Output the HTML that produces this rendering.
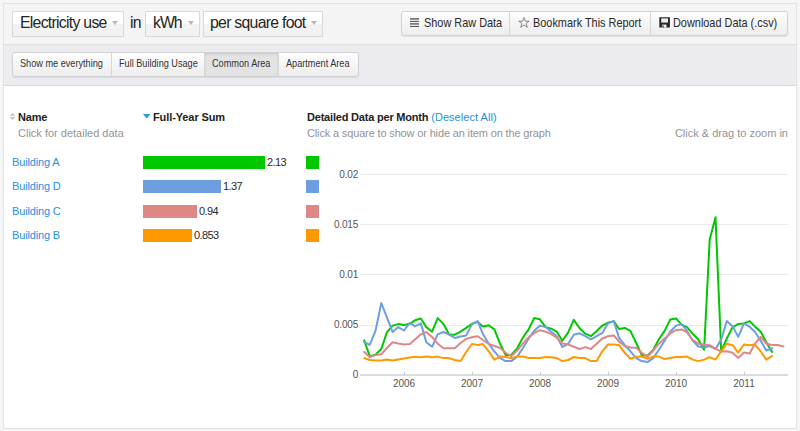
<!DOCTYPE html>
<html><head><meta charset="utf-8">
<style>
*{box-sizing:border-box}
html,body{margin:0;padding:0;width:800px;height:431px;overflow:hidden;background:#f6f6f6;font-family:"Liberation Sans",sans-serif;color:#333}
.abs{position:absolute}
#box{position:absolute;left:3px;top:3px;width:794px;height:426px;border:1px solid #e3e3e3;background:#fff}
#top{position:absolute;left:4px;top:4px;width:792px;height:41px;background:#f4f4f4;border-bottom:1px solid #e1e1e5}
#band{position:absolute;left:4px;top:45px;width:792px;height:41px;background:#ececf0;border-bottom:1px solid #d9d9dc}
.sel{position:absolute;top:11px;height:26px;border:1px solid #dadada;background:linear-gradient(#ffffff 0,#ffffff 48%,#f3f3f3 52%,#f1f1f1 100%);}
.sel .t{position:absolute;left:7px;top:3px;font-size:15.8px;letter-spacing:-0.72px;color:#262626;white-space:nowrap;line-height:16px}
.arr{position:absolute;width:0;height:0;border-left:3px solid transparent;border-right:3px solid transparent;border-top:4px solid #b8b8b8}
.txt{position:absolute;white-space:nowrap;line-height:1}
.bgrp{position:absolute;border:1px solid #d2d2d2;border-radius:3px;background:linear-gradient(#fdfdfd,#ededed);box-shadow:0 1px 1px rgba(0,0,0,0.08)}
.div{position:absolute;top:0;bottom:0;width:1px;background:#d6d6d6}
.act{position:absolute;top:0;bottom:0;background:#e3e3e3;box-shadow:inset 0 1px 2px rgba(0,0,0,0.12)}
.bt{position:absolute;font-size:10.4px;transform:scaleX(0.88);transform-origin:0 0;color:#333;white-space:nowrap;line-height:1}
.link{color:#1f8fe5}
.gray{color:#939393}
.bar{position:absolute;left:143px;height:13px}
.val{position:absolute;font-size:11px;color:#2a2a2a;white-space:nowrap;line-height:1;letter-spacing:-0.6px}
.sq{position:absolute;left:306px;width:13px;height:13px}
.grid{position:absolute;left:360px;width:428px;height:1px;background:#ebebeb}
.yl{position:absolute;right:442px;font-size:10px;letter-spacing:-0.2px;color:#555;line-height:1;white-space:nowrap}
.xl{position:absolute;font-size:10px;color:#555;line-height:1;white-space:nowrap;width:40px;text-align:center}
.tick{position:absolute;top:372px;width:1px;height:3px;background:#c8c8c8}
</style></head><body>
<div id="box"></div>
<div id="top"></div>
<div id="band"></div>

<!-- selects -->
<div class="sel" style="left:12px;width:112px"><span class="t">Electricity use</span><div class="arr" style="left:99px;top:9px"></div></div>
<div class="txt" style="left:130px;top:15px;font-size:15.8px;letter-spacing:-0.72px;color:#262626">in</div>
<div class="sel" style="left:145px;width:55px"><span class="t" style="left:7px;letter-spacing:-1px">kWh</span><div class="arr" style="left:42px;top:9px"></div></div>
<div class="sel" style="left:203px;width:120px"><span class="t" style="left:6px">per square foot</span><div class="arr" style="left:107px;top:9px"></div></div>

<!-- right buttons -->
<div class="bgrp" style="left:401px;top:11px;width:387px;height:25px">
  <div class="div" style="left:107px"></div>
  <div class="div" style="left:248px"></div>
</div>
<div class="txt" style="left:424px;top:17px;font-size:12.4px;transform:scaleX(0.88);transform-origin:0 0;color:#2a2a2a">Show Raw Data</div>
<div class="txt" style="left:533px;top:17px;font-size:12.4px;transform:scaleX(0.88);transform-origin:0 0;color:#2a2a2a">Bookmark This Report</div>
<div class="txt" style="left:673px;top:17px;font-size:12.4px;transform:scaleX(0.88);transform-origin:0 0;color:#2a2a2a">Download Data (.csv)</div>
<!-- icons -->
<svg class="abs" style="left:410px;top:17px" width="11" height="12" viewBox="0 0 11 12"><g fill="#5a5a5a"><rect x="0" y="1.2" width="9" height="1.4"/><rect x="0" y="3.9" width="9" height="1.1"/><rect x="0" y="6.2" width="9" height="1.4"/><rect x="0" y="8.9" width="9" height="1.1"/></g></svg>
<svg class="abs" style="left:518px;top:17px" width="12" height="11" viewBox="0 0 12 11"><path d="M6 0.6 L7.3 4.2 L11.2 4.2 L8.1 6.5 L9.3 10.3 L6 8 L2.7 10.3 L3.9 6.5 L0.8 4.2 L4.7 4.2 Z" fill="none" stroke="#6e6e6e" stroke-width="0.8" stroke-linejoin="miter"/></svg>
<svg class="abs" style="left:659px;top:17px" width="12" height="11" viewBox="0 0 12 11"><path d="M0.3 0.2 H10.6 L10.9 0.6 V10.6 H0.3 Z" fill="#262626"/><rect x="2.2" y="1.4" width="6.8" height="4.2" fill="#ececec"/><rect x="2.9" y="7.6" width="4.6" height="3" fill="#f2f2f2"/><rect x="3.4" y="8.4" width="1.2" height="2.2" fill="#262626"/></svg>

<!-- band buttons -->
<div class="bgrp" style="left:12px;top:52px;width:347px;height:25px">
  <div class="div" style="left:98px"></div>
  <div class="act" style="left:192px;width:73px"></div>
  <div class="div" style="left:191px"></div>
  <div class="div" style="left:265px"></div>
</div>
<div class="bt" style="left:20px;top:59px">Show me everything</div>
<div class="bt" style="left:119px;top:59px">Full Building Usage</div>
<div class="bt" style="left:212px;top:59px">Common Area</div>
<div class="bt" style="left:286px;top:59px">Apartment Area</div>

<!-- left table header -->
<svg class="abs" style="left:9px;top:112px" width="7" height="9" viewBox="0 0 7 9"><path d="M3.5 0.8 L6.2 3.7 H0.8 Z M3.5 8 L6.2 5.1 H0.8 Z" fill="#c2c2c2"/></svg>
<div class="txt" style="left:18px;top:112px;font-size:11px;font-weight:bold;color:#222;letter-spacing:-0.2px">Name</div>
<div class="txt gray" style="left:18px;top:128px;font-size:11px;letter-spacing:0px">Click for detailed data</div>
<svg class="abs" style="left:143px;top:114px" width="8" height="5" viewBox="0 0 8 5"><path d="M0 0 H7.5 L3.75 4.5 Z" fill="#2b97e0"/></svg>
<div class="txt" style="left:153px;top:112px;font-size:11px;font-weight:bold;color:#222;letter-spacing:-0.1px">Full-Year Sum</div>

<div class="txt link" style="left:12px;top:157px;font-size:11px;letter-spacing:-0.15px">Building A</div>
<div class="txt link" style="left:12px;top:181px;font-size:11px;letter-spacing:-0.15px">Building D</div>
<div class="txt link" style="left:12px;top:206px;font-size:11px;letter-spacing:-0.15px">Building C</div>
<div class="txt link" style="left:12px;top:230px;font-size:11px;letter-spacing:-0.15px">Building B</div>

<div class="bar" style="top:156px;width:122px;background:#00c800"></div>
<div class="bar" style="top:180px;width:78px;background:#6d9ee0"></div>
<div class="bar" style="top:205px;width:54px;background:#df8787"></div>
<div class="bar" style="top:229px;width:49px;background:#ff9900"></div>
<div class="val" style="left:267px;top:157px">2.13</div>
<div class="val" style="left:223px;top:181px">1.37</div>
<div class="val" style="left:199px;top:206px">0.94</div>
<div class="val" style="left:194px;top:230px">0.853</div>

<!-- chart header -->
<div class="txt" style="left:307px;top:112px;font-size:11px;font-weight:bold;color:#222;letter-spacing:-0.2px">Detailed Data per Month <span class="link" style="font-weight:normal;letter-spacing:0.05px">(Deselect All)</span></div>
<div class="txt gray" style="left:307px;top:128px;font-size:11px;letter-spacing:-0.15px">Click a square to show or hide an item on the graph</div>
<div class="txt gray" style="right:12px;top:128px;font-size:11px;letter-spacing:0px">Click &amp; drag to zoom in</div>

<div class="sq" style="top:156px;background:#00c800"></div>
<div class="sq" style="top:180px;background:#6d9ee0"></div>
<div class="sq" style="top:205px;background:#df8787"></div>
<div class="sq" style="top:229px;background:#ff9900"></div>

<div class="grid" style="top:174px"></div>
<div class="grid" style="top:224px"></div>
<div class="grid" style="top:274px"></div>
<div class="grid" style="top:325px"></div>
<div class="grid" style="top:374px;height:2px;background:#dcdcdc"></div>
<div class="yl" style="top:170px">0.02</div>
<div class="yl" style="top:220px">0.015</div>
<div class="yl" style="top:270px">0.01</div>
<div class="yl" style="top:320px">0.005</div>
<div class="yl" style="top:370px">0</div>

<div class="tick" style="left:404px"></div>
<div class="tick" style="left:472px"></div>
<div class="tick" style="left:540px"></div>
<div class="tick" style="left:608px"></div>
<div class="tick" style="left:676px"></div>
<div class="tick" style="left:744px"></div>
<div class="xl" style="left:384px;top:379px">2006</div>
<div class="xl" style="left:452px;top:379px">2007</div>
<div class="xl" style="left:520px;top:379px">2008</div>
<div class="xl" style="left:588px;top:379px">2009</div>
<div class="xl" style="left:656px;top:379px">2010</div>
<div class="xl" style="left:724px;top:379px">2011</div>

<svg class="abs" style="left:0;top:0" width="800" height="431" viewBox="0 0 800 431">
<g fill="none" stroke-width="2" stroke-linejoin="round" stroke-linecap="round">
<path stroke="#00c800" d="M364.2 340.4 L369.7 356.1 L375.5 354.6 L381.3 349.0 L386.9 332.4 L392.6 325.6 L398.2 324.1 L404.0 324.9 L409.8 323.8 L415.0 320.3 L420.8 318.5 L426.3 327.1 L432.1 331.7 L437.7 318.1 L443.5 324.1 L449.2 334.4 L454.8 334.7 L460.6 331.7 L466.2 327.9 L472.0 323.7 L477.7 321.9 L482.9 326.4 L488.7 325.3 L494.3 329.4 L500.1 343.7 L505.7 355.0 L511.4 355.0 L517.2 348.3 L522.8 337.7 L528.6 329.4 L534.1 318.1 L539.9 319.3 L545.7 327.1 L551.1 328.7 L556.8 331.7 L562.4 340.7 L568.2 332.4 L573.8 319.9 L579.6 328.3 L585.3 333.7 L590.9 336.2 L596.7 330.9 L602.3 325.6 L608.0 322.6 L613.8 321.1 L619.0 329.0 L624.8 327.9 L630.4 330.9 L636.2 343.0 L641.7 355.0 L647.5 355.8 L653.3 349.8 L658.9 339.2 L664.6 330.9 L670.2 319.6 L676.0 318.4 L681.8 324.9 L687.0 327.1 L692.8 333.9 L698.3 339.5 L704.1 349.8 L709.7 239.4 L715.5 217.3 L721.2 351.3 L726.8 338.5 L732.6 327.1 L738.2 324.1 L744.0 323.4 L749.7 321.1 L754.9 326.4 L760.7 331.7 L766.3 342.2 L772.1 352.0"/>
<path stroke="#6d9ee0" d="M364.2 342.2 L369.7 344.9 L375.5 330.9 L381.3 303.0 L386.9 317.3 L392.6 332.0 L398.2 327.1 L404.0 330.5 L409.8 322.9 L415.0 326.4 L420.8 323.4 L426.3 342.2 L432.1 346.8 L437.7 334.4 L443.5 332.0 L449.2 334.7 L454.8 338.0 L460.6 336.5 L466.2 335.4 L472.0 324.1 L477.7 321.1 L482.9 333.9 L488.7 343.7 L494.3 351.3 L500.1 358.1 L505.7 361.1 L511.4 361.1 L517.2 356.6 L522.8 348.3 L528.6 338.7 L534.1 330.9 L539.9 325.6 L545.7 327.1 L551.1 331.7 L556.8 336.2 L562.4 347.1 L568.2 343.7 L573.8 334.7 L579.6 333.3 L585.3 336.2 L590.9 339.5 L596.7 336.2 L602.3 332.9 L608.0 323.4 L613.8 321.1 L619.0 337.7 L624.8 345.2 L630.4 351.3 L636.2 358.1 L641.7 361.1 L647.5 362.1 L653.3 358.1 L658.9 349.8 L664.6 340.7 L670.2 331.7 L676.0 325.6 L681.8 324.1 L687.0 330.9 L692.8 340.7 L698.3 346.5 L704.1 347.5 L709.7 346.0 L715.5 349.0 L721.2 339.5 L726.8 321.1 L732.6 326.4 L738.2 336.8 L744.0 323.4 L749.7 326.9 L754.9 331.7 L760.7 340.7 L766.3 350.5 L772.1 348.3"/>
<path stroke="#df8787" d="M364.2 352.0 L369.7 357.0 L375.5 355.1 L381.3 354.3 L386.9 348.0 L392.6 342.2 L398.2 343.4 L404.0 344.5 L409.8 344.0 L415.0 339.5 L420.8 334.3 L426.3 332.0 L432.1 337.0 L437.7 343.7 L443.5 348.3 L449.2 348.3 L454.8 348.3 L460.6 343.0 L466.2 338.9 L472.0 337.3 L477.7 336.2 L482.9 340.0 L488.7 344.0 L494.3 346.0 L500.1 348.0 L505.7 352.8 L511.4 356.1 L517.2 350.5 L522.8 343.7 L528.6 337.3 L534.1 333.2 L539.9 330.2 L545.7 331.7 L551.1 333.9 L556.8 337.7 L562.4 343.4 L568.2 344.5 L573.8 346.8 L579.6 349.0 L585.3 347.1 L590.9 349.0 L596.7 343.7 L602.3 338.5 L608.0 336.2 L613.8 335.4 L619.0 341.5 L624.8 346.0 L630.4 347.5 L636.2 347.7 L641.7 352.8 L647.5 356.6 L653.3 350.5 L658.9 343.7 L664.6 338.5 L670.2 333.5 L676.0 330.2 L681.8 329.4 L687.0 332.4 L692.8 340.0 L698.3 343.7 L704.1 344.5 L709.7 345.2 L715.5 348.6 L721.2 351.6 L726.8 351.3 L732.6 352.8 L738.2 358.1 L744.0 352.6 L749.7 353.5 L754.9 343.7 L760.7 337.0 L766.3 343.7 L772.1 345.0 L777.7 345.0 L783.4 346.5"/>
<path stroke="#ff9900" d="M364.2 358.1 L369.7 360.0 L375.5 360.6 L381.3 360.6 L386.9 359.6 L392.6 360.6 L398.2 359.6 L404.0 358.5 L409.8 357.6 L415.0 356.8 L420.8 357.2 L426.3 356.6 L432.1 357.3 L437.7 356.6 L443.5 358.1 L449.2 358.1 L454.8 360.0 L460.6 361.1 L466.2 352.0 L472.0 344.0 L477.7 344.9 L482.9 344.0 L488.7 351.3 L494.3 359.6 L500.1 356.6 L505.7 357.0 L511.4 358.1 L517.2 356.6 L522.8 356.6 L528.6 357.9 L534.1 358.1 L539.9 358.1 L545.7 357.0 L551.1 357.3 L556.8 358.1 L562.4 361.1 L568.2 360.0 L573.8 357.0 L579.6 358.1 L585.3 358.1 L590.9 361.1 L596.7 361.1 L602.3 351.3 L608.0 344.5 L613.8 344.5 L619.0 345.2 L624.8 352.8 L630.4 358.8 L636.2 356.8 L641.7 356.6 L647.5 358.8 L653.3 356.6 L658.9 356.6 L664.6 359.1 L670.2 358.1 L676.0 357.0 L681.8 357.0 L687.0 356.6 L692.8 359.6 L698.3 361.1 L704.1 359.6 L709.7 357.3 L715.5 359.6 L721.2 351.3 L726.8 343.7 L732.6 345.2 L738.2 352.7 L744.0 344.5 L749.7 345.2 L754.9 344.5 L760.7 351.3 L766.3 359.6 L772.1 355.8"/>
</g>
</svg>
</body></html>
